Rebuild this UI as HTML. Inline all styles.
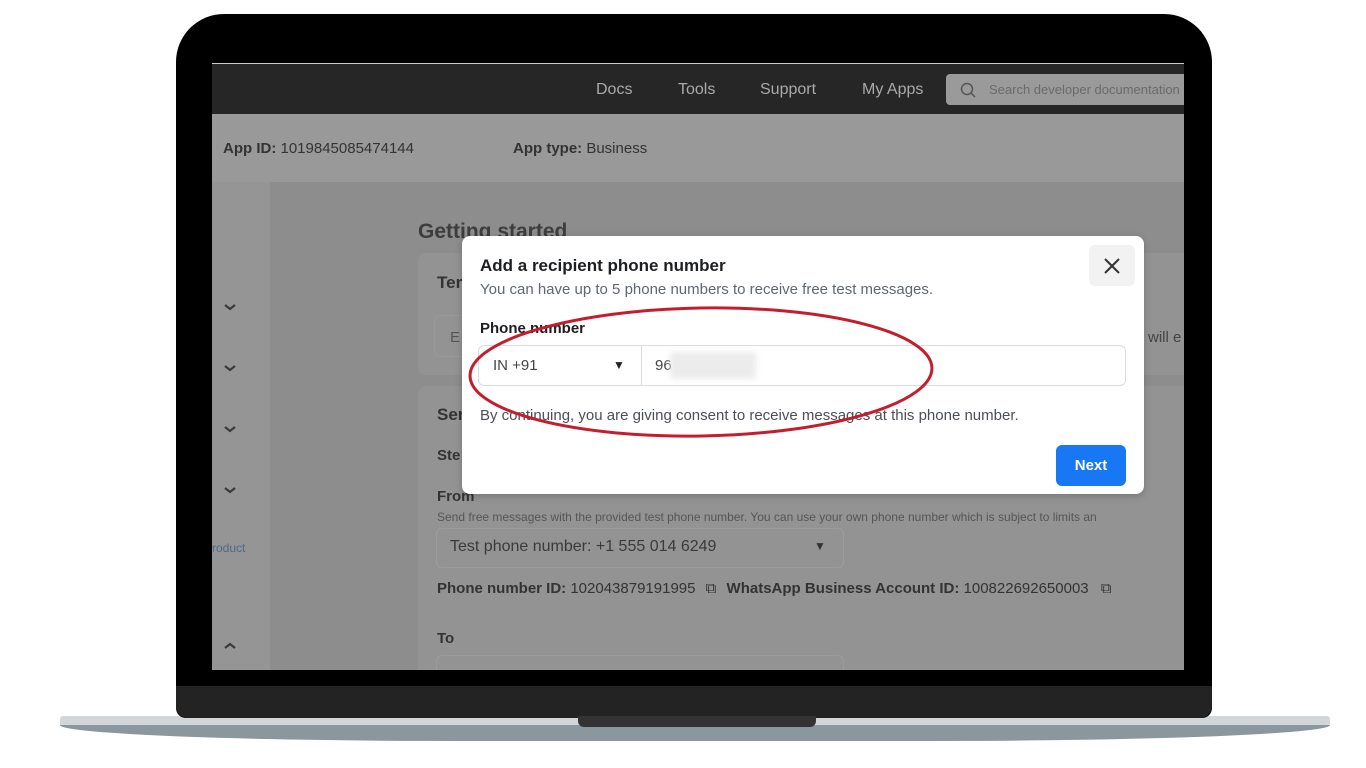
<!DOCTYPE html>
<html><head><meta charset="utf-8"><style>
*{margin:0;padding:0;box-sizing:border-box}
body{width:1366px;height:768px;background:#fff;position:relative;overflow:hidden;font-family:"Liberation Sans",sans-serif}
.a{position:absolute}
.t{position:absolute;white-space:nowrap}
</style></head><body>
<!-- base -->
<div class="a" style="left:60px;top:716px;width:1270px;height:10px;background:#d3d6d9;border-radius:3px 3px 0 0"></div>
<div class="a" style="left:60px;top:725px;width:1270px;height:16px;background:#8a979e;border-radius:0 0 400px 400px/0 0 16px 16px"></div>
<!-- body -->
<div class="a" style="left:176px;top:14px;width:1036px;height:704px;background:#000;border-radius:48px 48px 10px 10px"></div>
<div class="a" style="left:176px;top:686px;width:1036px;height:32px;background:#232323;border-radius:0 0 12px 12px"></div>
<div class="a" style="left:578px;top:716px;width:238px;height:11px;background:#333;border-radius:0 0 6px 6px"></div>
<!-- screen -->
<div class="a" style="left:212px;top:63px;width:972px;height:607px;background:#8d8d8d;overflow:hidden">
 <div class="a" style="left:0;top:0;width:972px;height:1px;background:#ccc"></div>
 <div class="a" style="left:0;top:1px;width:972px;height:50px;background:#262626"></div>
 <div class="t" style="left:384px;top:18px;color:#aaa;font-size:16px">Docs</div>
 <div class="t" style="left:466px;top:18px;color:#aaa;font-size:16px">Tools</div>
 <div class="t" style="left:548px;top:18px;color:#aaa;font-size:16px">Support</div>
 <div class="t" style="left:650px;top:18px;color:#aaa;font-size:16px">My Apps</div>
 <div class="a" style="left:734px;top:11px;width:250px;height:31px;background:#9a9a9a;border-radius:4px"></div>
 <svg class="a" style="left:748px;top:19px" width="16" height="16"><circle cx="7" cy="7" r="5.5" fill="none" stroke="#555" stroke-width="1.5"/><path d="M11 11l4 4" stroke="#555" stroke-width="1.5"/></svg>
 <div class="t" style="left:777px;top:19px;color:#6a6a6a;font-size:13px">Search developer documentation</div>
 <div class="a" style="left:0;top:51px;width:972px;height:68px;background:#999"></div>
 <div class="t" style="left:11px;top:77px;color:#333;font-size:15px"><b>App ID:</b> 1019845085474144</div>
 <div class="t" style="left:301px;top:77px;color:#333;font-size:15px"><b>App type:</b> Business</div>
 <div class="a" style="left:0;top:119px;width:58px;height:488px;background:#959595"></div>
 <div class="t" style="left:206px;top:157px;color:#3d3d3d;font-size:21px;font-weight:bold">Getting started</div>
 <div class="a" style="left:206px;top:190px;width:780px;height:122px;background:#939393;border-radius:8px"></div>
 <div class="t" style="left:225px;top:210px;color:#333;font-size:17px;font-weight:bold">Ter</div>
 <div class="a" style="left:222px;top:252px;width:60px;height:42px;border:1px solid #999;border-radius:6px"></div>
 <div class="t" style="left:238px;top:266px;color:#555;font-size:15px">E</div>
 <div class="t" style="left:936px;top:266px;color:#444;font-size:15px">will e</div>
 <div class="a" style="left:206px;top:323px;width:780px;height:300px;background:#939393;border-radius:8px"></div>
 <div class="t" style="left:225px;top:342px;color:#333;font-size:17px;font-weight:bold">Ser</div>
 <div class="t" style="left:225px;top:384px;color:#333;font-size:15px;font-weight:bold">Ste</div>
 <div class="t" style="left:225px;top:425px;color:#333;font-size:15px;font-weight:bold">From</div>
 <div class="t" style="left:225px;top:447px;color:#555;font-size:12px">Send free messages with the provided test phone number. You can use your own phone number which is subject to limits an</div>
 <div class="a" style="left:224px;top:465px;width:408px;height:40px;border:1px solid #9c9c9c;border-radius:6px"></div>
 <div class="t" style="left:238px;top:475px;color:#3a3a3a;font-size:16px">Test phone number: +1 555 014 6249</div>
 <div class="t" style="left:602px;top:476px;color:#333;font-size:12px">▼</div>
 <div class="t" style="left:225px;top:517px;color:#333;font-size:15px"><b>Phone number ID:</b> 102043879191995 <span style="margin:0 6px">⧉</span> <b>WhatsApp Business Account ID:</b> 100822692650003 <span style="margin-left:8px">⧉</span></div>
 <div class="t" style="left:225px;top:567px;color:#333;font-size:15px;font-weight:bold">To</div>
 <div class="a" style="left:224px;top:592px;width:408px;height:40px;border:1px solid #9c9c9c;border-radius:6px"></div>
 <svg class="a" style="left:10px;top:230px" width="16" height="400" fill="none" stroke="#3a3a3a" stroke-width="2.2"><path d="M3 12l5 4 5-4M3 73l5 4 5-4M3 134l5 4 5-4M3 195l5 4 5-4M3 355l5-4 5 4"/></svg>
 <div class="t" style="left:0;top:478px;color:#4a6b8a;font-size:12px">roduct</div>
</div>
<!-- modal -->
<div class="a" style="left:462px;top:236px;width:682px;height:258px;background:#fff;border-radius:8px;box-shadow:0 2px 8px rgba(0,0,0,.2)"></div>
<div class="t" style="left:480px;top:256px;color:#1c1e21;font-size:17px;font-weight:bold">Add a recipient phone number</div>
<div class="t" style="left:480px;top:281px;color:#606770;font-size:15px">You can have up to 5 phone numbers to receive free test messages.</div>
<div class="a" style="left:1089px;top:245px;width:46px;height:41px;background:#f2f2f2;border-radius:6px"></div>
<svg class="a" style="left:1103px;top:257px" width="18" height="18" stroke="#333" stroke-width="2"><path d="M2 2l14 14M16 2L2 16"/></svg>
<div class="t" style="left:480px;top:320px;color:#1c1e21;font-size:15px;font-weight:bold">Phone number</div>
<div class="a" style="left:478px;top:345px;width:648px;height:41px;border:1px solid #dadde1;border-radius:6px"></div>
<div class="a" style="left:641px;top:346px;width:1px;height:39px;background:#dadde1"></div>
<div class="t" style="left:493px;top:357px;color:#444;font-size:15px">IN +91</div>
<div class="t" style="left:613px;top:358px;color:#222;font-size:12px">▼</div>
<div class="t" style="left:655px;top:357px;color:#444;font-size:15px">96</div>
<div class="a" style="left:670px;top:352px;width:86px;height:27px;background:#ececec;filter:blur(3px)"></div>
<div class="t" style="left:480px;top:407px;color:#4b4f56;font-size:15px">By continuing, you are giving consent to receive messages at this phone number.</div>
<div class="a" style="left:1056px;top:445px;width:70px;height:41px;background:#1877f2;border-radius:6px;color:#fff;font-weight:bold;font-size:15px;text-align:center;line-height:41px">Next</div>
<svg class="a" style="left:0;top:0" width="1366" height="768"><ellipse cx="701" cy="372" rx="231" ry="64" transform="rotate(-1 701 372)" fill="none" stroke="#c41e2e" stroke-width="3"/></svg>
</body></html>
